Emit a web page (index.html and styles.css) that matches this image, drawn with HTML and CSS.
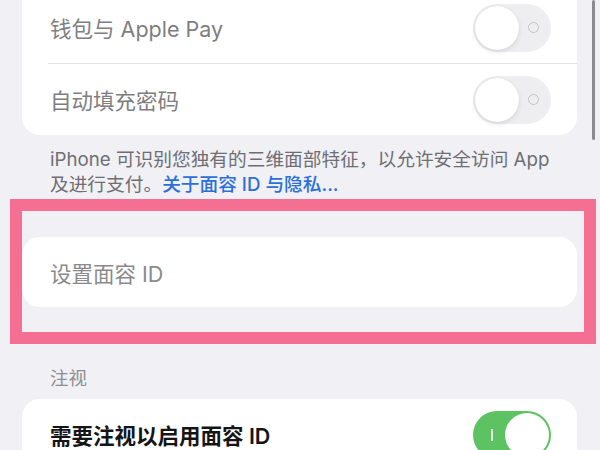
FILE: index.html
```html
<!DOCTYPE html>
<html lang="zh-CN">
<head>
  <meta charset="UTF-8">
  <meta name="viewport" content="width=device-width, initial-scale=1.0">
  <title>面容 ID 与密码</title>
  <link rel="stylesheet" href="styles.css">
</head>
<body>
  <div class="scroll-bar"></div>

  <!-- Use Face ID for -->
  <div class="card card-top">
    <div class="row">
      <span class="label dim">钱包与 Apple Pay</span>
      <div class="switch"><span class="knob"></span><span class="mark-off"></span></div>
    </div>
    <div class="sep"></div>
    <div class="row">
      <span class="label dim">自动填充密码</span>
      <div class="switch"><span class="knob"></span><span class="mark-off"></span></div>
    </div>
  </div>

  <p class="note">iPhone 可识别您独有的三维面部特征，以允许安全访问 App 及进行支付。<a class="link">关于面容 ID 与隐私...</a></p>

  <!-- Highlighted setup -->
  <div class="highlight">
    <div class="card card-setup">
      <div class="row">
        <span class="label muted">设置面容 ID</span>
      </div>
    </div>
  </div>

  <!-- Attention -->
  <div class="section-title">注视</div>
  <div class="card">
    <div class="row">
      <span class="label strong">需要注视以启用面容 ID</span>
      <div class="switch on"><span class="mark-on"></span><span class="knob"></span></div>
    </div>
  </div>
</body>
</html>
```

FILE: styles.css
```css
body {
  margin: 0;
  padding: 0;
  background-color: #f0f0f5;
  font-family: "Inter", "Noto Sans CJK SC", sans-serif;
  overflow: hidden;
}
.scroll-bar {
  position: absolute;
  top: 0;
  left: 592px;
  width: 3px;
  height: 140px;
  border-radius: 2px;
  background-color: #8c8c8e;
}
.card {
  background-color: white;
  border-radius: 18px;
  margin: 0 23px 0 22px;
}
.card-top {
  margin-top: -8px;
  border-top-left-radius: 0;
  border-top-right-radius: 0;
}
.row {
  height: 71px;
  display: flex;
  align-items: center;
  justify-content: space-between;
  padding: 0 26px 0 28px;
}
.sep {
  height: 1px;
  margin-left: 26px;
  background-color: #e3e3e6;
}
.label {
  font-size: 21.5px;
}
.dim {
  color: #7e7e80;
}
.muted {
  color: #8a8a8c;
}
.strong {
  color: #151517;
  font-weight: 600;
}
.note {
  margin: 12px 36px 0 50px;
  font-size: 18.7px;
  line-height: 25px;
  color: #6e6e73;
}
.link {
  color: #2d6fd9;
  font-weight: 500;
  line-height: 20px;
}
.highlight {
  margin: 2px 4px 0 10px;
  border: 12px solid #f46f92;
  padding: 26px 7px 25px 0;
}
.card-setup {
  margin: 0;
}
.card-setup .row {
  height: 70px;
}
.section-title {
  margin: 22px 0 9px 50px;
  font-size: 18.5px;
  line-height: 24px;
  color: #8e8e93;
}
.switch {
  position: relative;
  width: 78px;
  height: 48px;
  border-radius: 24px;
  background-color: #eeeef0;
  flex-shrink: 0;
}
.switch .knob {
  position: absolute;
  top: 2px;
  left: 2px;
  width: 44px;
  height: 44px;
  border-radius: 50%;
  background-color: white;
  box-shadow: 0 2px 5px rgba(0, 0, 0, 0.1), 0 0 1px rgba(0, 0, 0, 0.08);
}
.mark-off {
  position: absolute;
  top: 18px;
  left: 55px;
  width: 9px;
  height: 9px;
  border: 1.5px solid #c4c4c7;
  border-radius: 50%;
}
.switch.on {
  background-color: #5dc262;
}
.switch.on .knob {
  left: 32px;
  box-shadow: none;
}
.mark-on {
  position: absolute;
  top: 18px;
  left: 18px;
  width: 2px;
  height: 12px;
  background-color: rgba(255, 255, 255, 0.8);
}
```
